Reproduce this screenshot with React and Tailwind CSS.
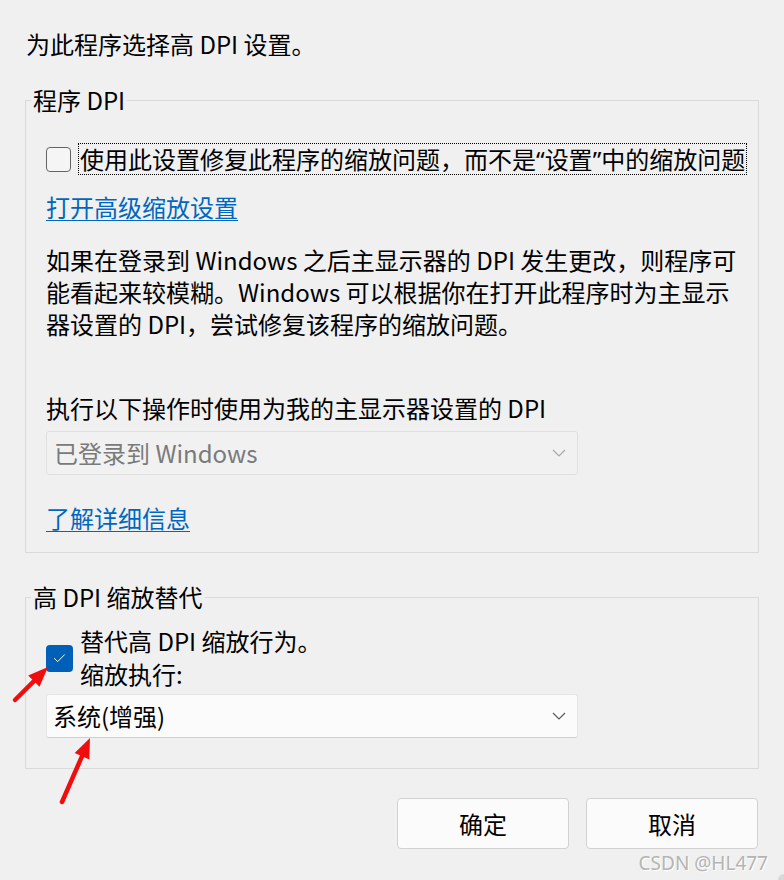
import { Check } from 'lucide-react'

const font = { fontFamily: '"Noto Sans CJK SC", "Noto Sans", sans-serif' }
const latin = { fontFamily: '"Noto Sans", sans-serif' }

function Chevron({ className }) {
    return (
        <svg width="14" height="8" viewBox="0 0 14 8" className={className}>
            <path d="M1 1 L7 7 L13 1" fill="none" stroke="currentColor" strokeWidth="1.2" />
        </svg>
    )
}

function Arrow({ x1, y1, x2, y2 }) {
    // red annotation arrow, tip at (x2, y2)
    const dx = x2 - x1
    const dy = y2 - y1
    const len = Math.hypot(dx, dy)
    const ux = dx / len
    const uy = dy / len
    const bx = x2 - ux * 20
    const by = y2 - uy * 20
    const px = -uy * 8
    const py = ux * 8
    return (
        <g>
            <line x1={x1} y1={y1} x2={bx + ux * 4} y2={by + uy * 4} stroke="#f20d0d" strokeWidth="4.5" strokeLinecap="round" />
            <polygon points={`${x2},${y2} ${bx + px},${by + py} ${bx - px},${by - py}`} fill="#f20d0d" />
        </g>
    )
}

export default function App() {
    return (
        <div className="relative w-[784px] h-[880px] overflow-hidden bg-[#f0f0f0] text-[24px] leading-[32px] text-black" style={font}>
            <div className="pl-[26px] pt-[28px] whitespace-nowrap">为此程序选择高 DPI 设置。</div>

            {/* Program DPI */}
            <fieldset className="ml-[25px] mt-[24px] w-[734px] border border-[#dadada] pl-[20px] pb-[18px]">
                <legend className="-ml-[15px] px-[2px] whitespace-nowrap">程序 DPI</legend>

                <div className="mt-[27px] flex items-center gap-[7px]">
                    <span className="w-[25px] h-[25px] shrink-0 rounded-[4px] border border-[#646464] bg-[#f5f5f5]" />
                    <span className="border border-dotted border-black px-[1px] h-[32px] leading-[30px] whitespace-nowrap">
                        使用此设置修复此程序的缩放问题，而不是<span style={latin}>“</span>设置<span style={latin}>”</span>中的缩放问题
                    </span>
                </div>

                <a className="mt-[16px] block w-fit text-[#0067c0] underline underline-offset-[3px] decoration-[1px]">打开高级缩放设置</a>

                <div className="mt-[21px] whitespace-nowrap">
                    <div>如果在登录到 Windows 之后主显示器的 DPI 发生更改，则程序可</div>
                    <div>能看起来较模糊。Windows 可以根据你在打开此程序时为主显示</div>
                    <div>器设置的 DPI，尝试修复该程序的缩放问题。</div>
                </div>

                <div className="mt-[52px] whitespace-nowrap">执行以下操作时使用为我的主显示器设置的 DPI</div>

                <div className="mt-[7px] w-[532px] h-[44px] flex items-center justify-between rounded-[3px] border border-[#e0e0e0] bg-[#f1f1f1] pl-[7px] pr-[11px] text-[#7a7a7a]">
                    <span>已登录到 Windows</span>
                    <Chevron className="text-[#a8a8a8]" />
                </div>

                <a className="mt-[27px] block w-fit text-[#0067c0] underline underline-offset-[3px] decoration-[1px]">了解详细信息</a>
            </fieldset>

            {/* High DPI override */}
            <fieldset className="ml-[25px] mt-[28px] w-[734px] border border-[#dadada] pl-[20px] pb-[30px]">
                <legend className="-ml-[15px] px-[2px] whitespace-nowrap">高 DPI 缩放替代</legend>

                <div className="mt-[11px] flex items-center gap-[7px]">
                    <span className="w-[27px] h-[27px] mt-[3px] shrink-0 rounded-[4px] bg-[#005fb8] flex items-center justify-center">
                        <Check className="w-[15px] h-[15px] text-white" strokeWidth={1.6} />
                    </span>
                    <div className="leading-[33px] whitespace-nowrap">
                        <div>替代高 DPI 缩放行为。</div>
                        <div>缩放执行:</div>
                    </div>
                </div>

                <div className="mt-[4px] w-[532px] h-[44px] flex items-center justify-between rounded-[3px] border border-[#e5e5e5] border-b-[#d0d0d0] bg-[#fbfbfb] pl-[6px] pr-[11px]">
                    <span>系统(增强)</span>
                    <Chevron className="text-[#5a5a5a]" />
                </div>
            </fieldset>

            <div className="mt-[29px] flex justify-end gap-[17px] pr-[26px]">
                <button className="w-[172px] h-[51px] rounded-[4px] border border-[#d2d2d2] bg-[#fbfbfb]">确定</button>
                <button className="w-[172px] h-[51px] rounded-[4px] border border-[#d2d2d2] bg-[#fbfbfb]">取消</button>
            </div>

            {/* watermark */}
            <div className="absolute right-[16px] bottom-[5px] text-[19px] leading-[24px] text-[#b4b4b4] [text-shadow:1px_1px_0_#ffffff]" style={latin}>
                CSDN @HL477
            </div>
            <div className="absolute right-0 bottom-0 w-[6px] h-[6px] bg-[#d8d8d8] rounded-tl-[6px]" />

            {/* annotation arrows */}
            <svg className="absolute left-0 top-0 pointer-events-none" width="784" height="880">
                <Arrow x1={15} y1={700} x2={48} y2={667} />
                <Arrow x1={62} y1={802} x2={90} y2={738} />
            </svg>
        </div>
    )
}
